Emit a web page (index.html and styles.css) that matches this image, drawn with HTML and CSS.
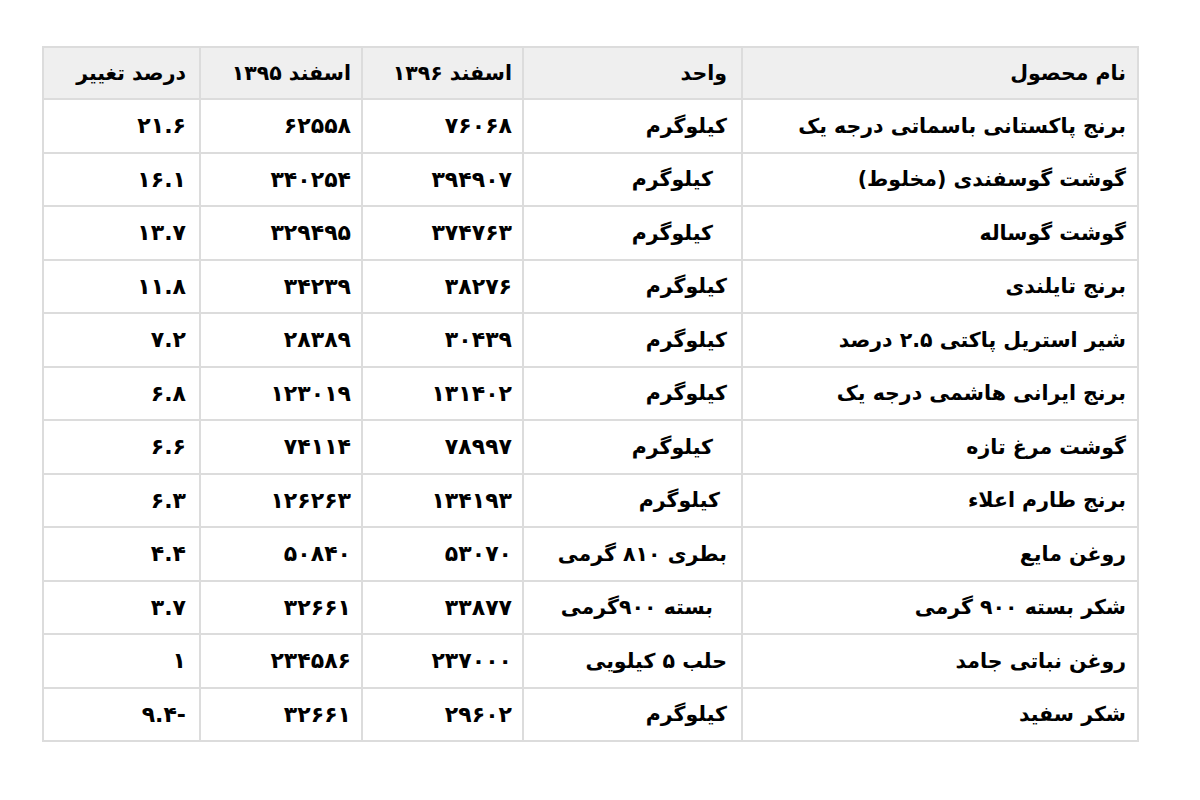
FILE: index.html
```html
<!DOCTYPE html>
<html lang="fa" dir="rtl">
<head>
<meta charset="utf-8">
<link rel="stylesheet" href="styles.css">
</head>
<body>
<div class="page">
<table class="price-table">
  <colgroup>
    <col class="c-name"><col class="c-unit"><col class="c-y96"><col class="c-y95"><col class="c-pct">
  </colgroup>
  <thead>
    <tr><th>نام محصول</th><th class="pad-u">واحد</th><th class="pad-n">اسفند ۱۳۹۶</th><th class="pad-n">اسفند ۱۳۹۵</th><th class="pad-p">درصد تغییر</th></tr>
  </thead>
  <tbody>
    <tr><td>برنج پاکستانی باسماتی درجه یک</td><td class="pad-u">کیلوگرم</td><td class="pad-n num">۷۶۰۶۸</td><td class="pad-n num">۶۲۵۵۸</td><td class="pad-p num">۲۱.۶</td></tr>
    <tr><td>گوشت گوسفندی (مخلوط)</td><td class="pad-u2">کیلوگرم</td><td class="pad-n num">۳۹۴۹۰۷</td><td class="pad-n num">۳۴۰۲۵۴</td><td class="pad-p num">۱۶.۱</td></tr>
    <tr><td>گوشت گوساله</td><td class="pad-u2">کیلوگرم</td><td class="pad-n num">۳۷۴۷۶۳</td><td class="pad-n num">۳۲۹۴۹۵</td><td class="pad-p num">۱۳.۷</td></tr>
    <tr><td>برنج تایلندی</td><td class="pad-u">کیلوگرم</td><td class="pad-n num">۳۸۲۷۶</td><td class="pad-n num">۳۴۲۳۹</td><td class="pad-p num">۱۱.۸</td></tr>
    <tr><td>شیر استریل پاکتی ۲.۵ درصد</td><td class="pad-u">کیلوگرم</td><td class="pad-n num">۳۰۴۳۹</td><td class="pad-n num">۲۸۳۸۹</td><td class="pad-p num">۷.۲</td></tr>
    <tr><td>برنج ایرانی هاشمی درجه یک</td><td class="pad-u">کیلوگرم</td><td class="pad-n num">۱۳۱۴۰۲</td><td class="pad-n num">۱۲۳۰۱۹</td><td class="pad-p num">۶.۸</td></tr>
    <tr><td>گوشت مرغ تازه</td><td class="pad-u2">کیلوگرم</td><td class="pad-n num">۷۸۹۹۷</td><td class="pad-n num">۷۴۱۱۴</td><td class="pad-p num">۶.۶</td></tr>
    <tr><td>برنج طارم اعلاء</td><td class="pad-u3">کیلوگرم</td><td class="pad-n num">۱۳۴۱۹۳</td><td class="pad-n num">۱۲۶۲۶۳</td><td class="pad-p num">۶.۳</td></tr>
    <tr><td>روغن مایع</td><td class="pad-u">بطری ۸۱۰ گرمی</td><td class="pad-n num">۵۳۰۷۰</td><td class="pad-n num">۵۰۸۴۰</td><td class="pad-p num">۴.۴</td></tr>
    <tr><td>شکر بسته ۹۰۰ گرمی</td><td class="pad-u2">بسته ۹۰۰گرمی</td><td class="pad-n num">۳۳۸۷۷</td><td class="pad-n num">۳۲۶۶۱</td><td class="pad-p num">۳.۷</td></tr>
    <tr><td>روغن نباتی جامد</td><td class="pad-u">حلب ۵ کیلویی</td><td class="pad-n num">۲۳۷۰۰۰</td><td class="pad-n num">۲۳۴۵۸۶</td><td class="pad-p num">۱</td></tr>
    <tr><td>شکر سفید</td><td class="pad-u">کیلوگرم</td><td class="pad-n num">۲۹۶۰۲</td><td class="pad-n num">۳۲۶۶۱</td><td class="pad-p num">-۹.۴</td></tr>
  </tbody>
</table>
</div>
</body>
</html>
```

FILE: styles.css
```css
html, body {
  margin: 0;
  padding: 0;
  background: #ffffff;
}

.page {
  padding: 46px 61px 0 42px;
}

.price-table {
  border-collapse: collapse;
  width: 1097px;
  table-layout: fixed;
  font-family: "DejaVu Sans", sans-serif;
  font-weight: bold;
  font-size: 20.5px;
  color: #000000;
  border: 2px solid #dcdcdc;
}

.c-name { width: 396px; }
.c-unit { width: 219px; }
.c-y96 { width: 161px; }
.c-y95 { width: 162px; }
.c-pct { width: 157px; }

.price-table th,
.price-table td {
  border: 2px solid #dcdcdc;
  text-align: right;
  padding: 0 11px 0 8px;
  height: 51.5px;
  white-space: nowrap;
  overflow: hidden;
}

.price-table thead th {
  background: #efefef;
  height: 50px;
  font-weight: bold;
}

.price-table tbody td {
  background: #ffffff;
}

.price-table .num { font-size: 22px; }

.price-table .pad-u { padding-right: 14px; }
.price-table .pad-u2 { padding-right: 28px; }
.price-table .pad-u3 { padding-right: 21px; }
.price-table .pad-n { padding-right: 10px; }
.price-table .pad-p { padding-right: 13px; }
```
